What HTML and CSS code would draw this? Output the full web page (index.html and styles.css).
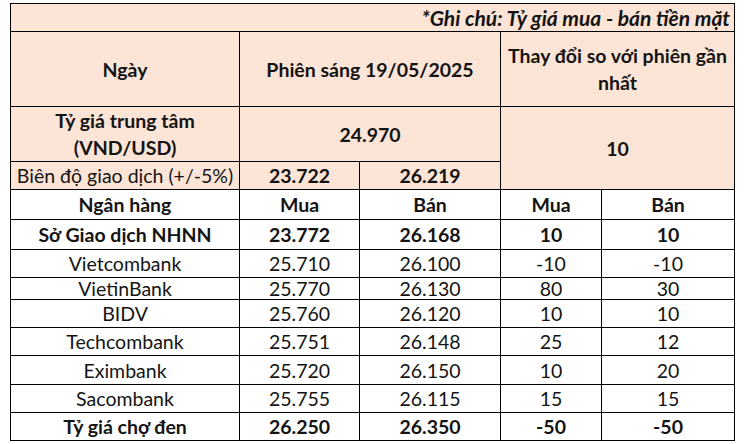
FILE: index.html
```html
<!DOCTYPE html>
<html lang="vi">
<head>
<meta charset="utf-8">
<title>Tỷ giá</title>
<link rel="stylesheet" href="styles.css">
</head>
<body>
<table class="rates">
  <colgroup>
    <col class="c1"><col class="c2"><col class="c3"><col class="c4"><col class="c5">
  </colgroup>
  <tr class="r-note peach">
    <td colspan="5" class="note">*Ghi chú: Tỷ giá mua - bán tiền mặt</td>
  </tr>
  <tr class="r-head peach">
    <td class="b">Ngày</td>
    <td colspan="2" class="b">Phiên sáng 19/05/2025</td>
    <td colspan="2" class="b">Thay đổi so với phiên gần<br>nhất</td>
  </tr>
  <tr class="r-center peach">
    <td class="b">Tỷ giá trung tâm<br>(VND/USD)</td>
    <td colspan="2" class="b">24.970</td>
    <td colspan="2" rowspan="2" class="b">10</td>
  </tr>
  <tr class="r-band peach">
    <td>Biên độ giao dịch (+/-5%)</td>
    <td class="b">23.722</td>
    <td class="b">26.219</td>
  </tr>
  <tr class="r-30 b">
    <td>Ngân hàng</td><td>Mua</td><td>Bán</td><td>Mua</td><td>Bán</td>
  </tr>
  <tr class="r-30 b">
    <td>Sở Giao dịch NHNN</td><td>23.772</td><td>26.168</td><td>10</td><td>10</td>
  </tr>
  <tr class="r-28">
    <td>Vietcombank</td><td>25.710</td><td>26.100</td><td>-10</td><td>-10</td>
  </tr>
  <tr class="r-22">
    <td>VietinBank</td><td>25.770</td><td>26.130</td><td>80</td><td>30</td>
  </tr>
  <tr class="r-28">
    <td>BIDV</td><td>25.760</td><td>26.120</td><td>10</td><td>10</td>
  </tr>
  <tr class="r-28">
    <td>Techcombank</td><td>25.751</td><td>26.148</td><td>25</td><td>12</td>
  </tr>
  <tr class="r-29">
    <td>Eximbank</td><td>25.720</td><td>26.150</td><td>10</td><td>20</td>
  </tr>
  <tr class="r-28">
    <td>Sacombank</td><td>25.755</td><td>26.115</td><td>15</td><td>15</td>
  </tr>
  <tr class="r-28 b">
    <td>Tỷ giá chợ đen</td><td>26.250</td><td>26.350</td><td>-50</td><td>-50</td>
  </tr>
</table>
</body>
</html>
```

FILE: styles.css
```css
html, body {
  margin: 0;
  padding: 0;
  background: #ffffff;
}

body {
  padding: 3px 0 0 10px;
}

.rates {
  border-collapse: collapse;
  table-layout: fixed;
  width: 724px;
  font-family: Lato, "Liberation Sans", sans-serif;
  font-size: 19.5px;
  color: #141414;
}

.c1 { width: 229px; }
.c2 { width: 120px; }
.c3 { width: 141px; }
.c4 { width: 101px; }
.c5 { width: 133px; }

.rates td {
  border: 1px solid #000;
  padding: 0 2px;
  text-align: center;
  vertical-align: middle;
  line-height: 27px;
  white-space: nowrap;
  overflow: hidden;
}

.peach td {
  background: #fce4d6;
}

.b,
.b td {
  font-weight: 700;
}

.rates td.note {
  text-align: right;
  font-style: italic;
  font-weight: 700;
  font-size: 21px;
  padding-right: 4px;
}

.r-note { height: 28px; }
.r-head { height: 75px; }
.r-center { height: 55px; }
.r-band { height: 28px; }
.r-30 { height: 30px; }
.r-29 { height: 29px; }
.r-28 { height: 28px; }
.r-22 { height: 22px; }

.r-22 td {
  line-height: 20px;
}
```
